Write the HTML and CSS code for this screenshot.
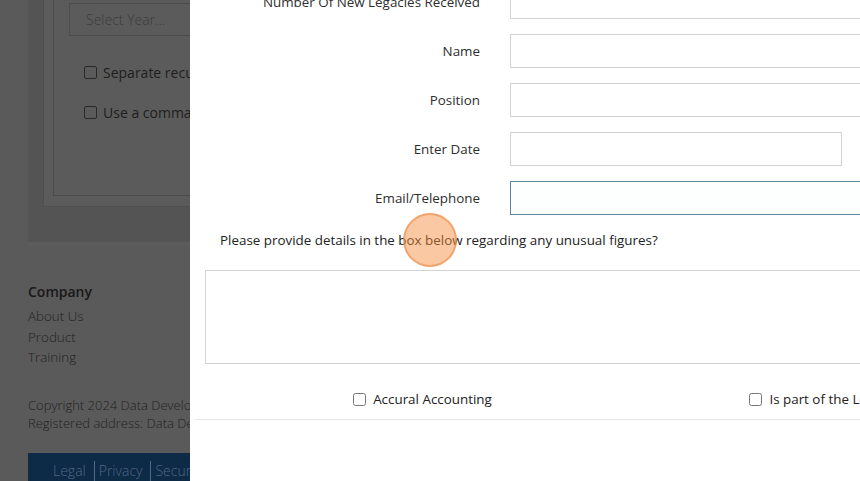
FILE: index.html
```html
<!DOCTYPE html>
<html lang="en">
<head>
<meta charset="utf-8">
<title>Legacy Return</title>
<link rel="stylesheet" href="styles.css">
</head>
<body>
<div class="page">
  <div class="content">
    <div class="panel">
      <div class="card">
        <div class="select">Select Year...</div>
        <label class="bg-check"><span class="bg-box"></span>Separate recurring and one-off figures</label>
        <label class="bg-check"><span class="bg-box"></span>Use a comma as the decimal separator</label>
      </div>
    </div>
  </div>
  <footer class="footer">
    <div class="footer-title">Company</div>
    <ul class="footer-links">
      <li>About Us</li>
      <li>Product</li>
      <li>Training</li>
    </ul>
    <p class="copyright">Copyright 2024 Data Development Ltd. All rights reserved.<br>Registered address: Data Development Ltd, London</p>
    <div class="legal-bar">
      <span class="legal-item">Legal</span>
      <span class="legal-item">Privacy</span>
      <span class="legal-item">Security</span>
    </div>
  </footer>
</div>

<div class="modal">
  <div class="modal-body">
    <div class="form-grid">
      <label class="form-label">Number Of New Legacies Received</label>
      <input class="form-input" type="text">
      <label class="form-label">Name</label>
      <input class="form-input" type="text">
      <label class="form-label">Position</label>
      <input class="form-input" type="text">
      <label class="form-label">Enter Date</label>
      <input class="form-input date-input" type="text">
      <label class="form-label">Email/Telephone</label>
      <input class="form-input focused" type="text">
    </div>
    <p class="question">Please provide details in the box below regarding any unusual figures?</p>
    <textarea class="details"></textarea>
    <div class="check-row">
      <label class="check-item"><input type="checkbox">Accural Accounting</label>
      <label class="check-item check-item-wide"><input type="checkbox">Is part of the Legacy Consortium</label>
    </div>
    <div class="modal-footer"></div>
  </div>
</div>

<div class="click-dot"></div>
</body>
</html>
```

FILE: styles.css
```css
html, body {
  margin: 0;
  padding: 0;
}
body {
  width: 860px;
  height: 481px;
  overflow: hidden;
  background: #5a5a5a;
  font-family: "Open Sans", "Liberation Sans", sans-serif;
  font-size: 14px;
  color: #333;
  position: relative;
}

/* dimmed background page */
.page {
  width: 860px;
}
.content {
  margin-left: 28px;
  height: 242px;
  background: #545454;
  padding-left: 15px;
  border-bottom: 4px solid #5c5c5c;
}
.panel {
  height: 206px;
  background: #5b5b5b;
  border-left: 1px solid #4f4f4f;
  border-bottom: 1px solid #4f4f4f;
  padding-left: 9px;
}
.card {
  height: 192px;
  border-left: 1px solid #4a4a4a;
  border-bottom: 1px solid #4a4a4a;
  padding: 3px 0 0 15px;
}
.select {
  width: 300px;
  height: 31px;
  border: 1px solid #4c4c4c;
  padding-left: 16px;
  line-height: 31px;
  color: #3c3c3c;
  font-weight: 300;
}
.bg-check {
  display: flex;
  align-items: center;
  gap: 6px;
  margin-left: 15px;
  height: 20px;
  color: #1e1e1e;
  white-space: nowrap;
}
.bg-check:first-of-type {
  margin-top: 26px;
}
.bg-check + .bg-check {
  margin-top: 20px;
}
.bg-box {
  width: 11px;
  height: 11px;
  border: 1px solid #2a2a2a;
  border-radius: 2px;
  flex: none;
}

.footer {
  padding-left: 28px;
  padding-top: 36px;
  color: #262626;
}
.footer-title {
  font-weight: 600;
  line-height: 20px;
  color: #181818;
}
.footer-links {
  list-style: none;
  margin: 4px 0 0;
  padding: 0;
  font-size: 13.4px;
  font-weight: 300;
  line-height: 20.5px;
  color: #222;
}
.copyright {
  margin: 28px 0 0;
  line-height: 18px;
  font-size: 13px;
  font-weight: 300;
  color: #222;
  white-space: nowrap;
}
.legal-bar {
  margin-top: 21px;
  height: 40px;
  background: #0d2a47;
  padding-left: 20px;
  display: flex;
  align-items: flex-start;
}
.legal-item {
  margin-top: 8px;
  padding: 0 8px 0 5px;
  line-height: 20px;
  font-weight: 300;
  color: #4d6782;
  font-size: 14px;
}
.legal-item + .legal-item {
  border-left: 1px solid #4d6782;
  padding-left: 4px;
}

/* modal */
.modal {
  position: absolute;
  top: 0;
  left: 190px;
  width: 670px;
  height: 481px;
  background: #fff;
  overflow: hidden;
  font-size: 13.4px;
}
.modal-body {
  width: 900px;
  margin-top: -15px;
}
.form-grid {
  display: grid;
  grid-template-columns: 290px 400px;
  column-gap: 30px;
  row-gap: 15px;
  align-items: center;
}
.form-label {
  text-align: right;
  color: #2e2e2e;
  line-height: 20px;
}
.form-input {
  box-sizing: border-box;
  width: 400px;
  height: 34px;
  margin: 0;
  border: 1px solid #d2d2d2;
  border-radius: 0;
  background: #fff;
  font: inherit;
  padding: 0 10px;
  outline: none;
}
.date-input {
  width: 332px;
}
.focused {
  border-color: #62849b;
  background: #fdfefe;
}
.question {
  margin: 15px 0 0;
  padding-left: 30px;
  line-height: 20px;
  color: #222;
}
.details {
  display: block;
  box-sizing: border-box;
  margin: 20px 0 0 15px;
  width: 800px;
  height: 94px;
  border: 1px solid #d2d2d2;
  border-radius: 0;
  resize: none;
  outline: none;
  font: inherit;
}
.check-row {
  display: grid;
  grid-template-columns: 435px 435px;
  margin-left: 15px;
  padding: 25px 0 10px;
}
.check-item {
  display: flex;
  justify-content: center;
  align-items: center;
  gap: 7px;
  line-height: 20px;
  color: #222;
  white-space: nowrap;
}
.check-item-wide {
  padding-left: 6px;
}
.check-item input {
  margin: 0;
  width: 13px;
  height: 13px;
}
.modal-footer {
  margin-left: 5px;
  border-top: 1px solid #e6e6e6;
  height: 60px;
}

/* click indicator */
.click-dot {
  position: absolute;
  left: 403px;
  top: 213px;
  width: 50px;
  height: 50px;
  border-radius: 50%;
  background: rgba(245, 140, 60, 0.48);
  border: 2px solid rgba(236, 140, 70, 0.6);
}
```
